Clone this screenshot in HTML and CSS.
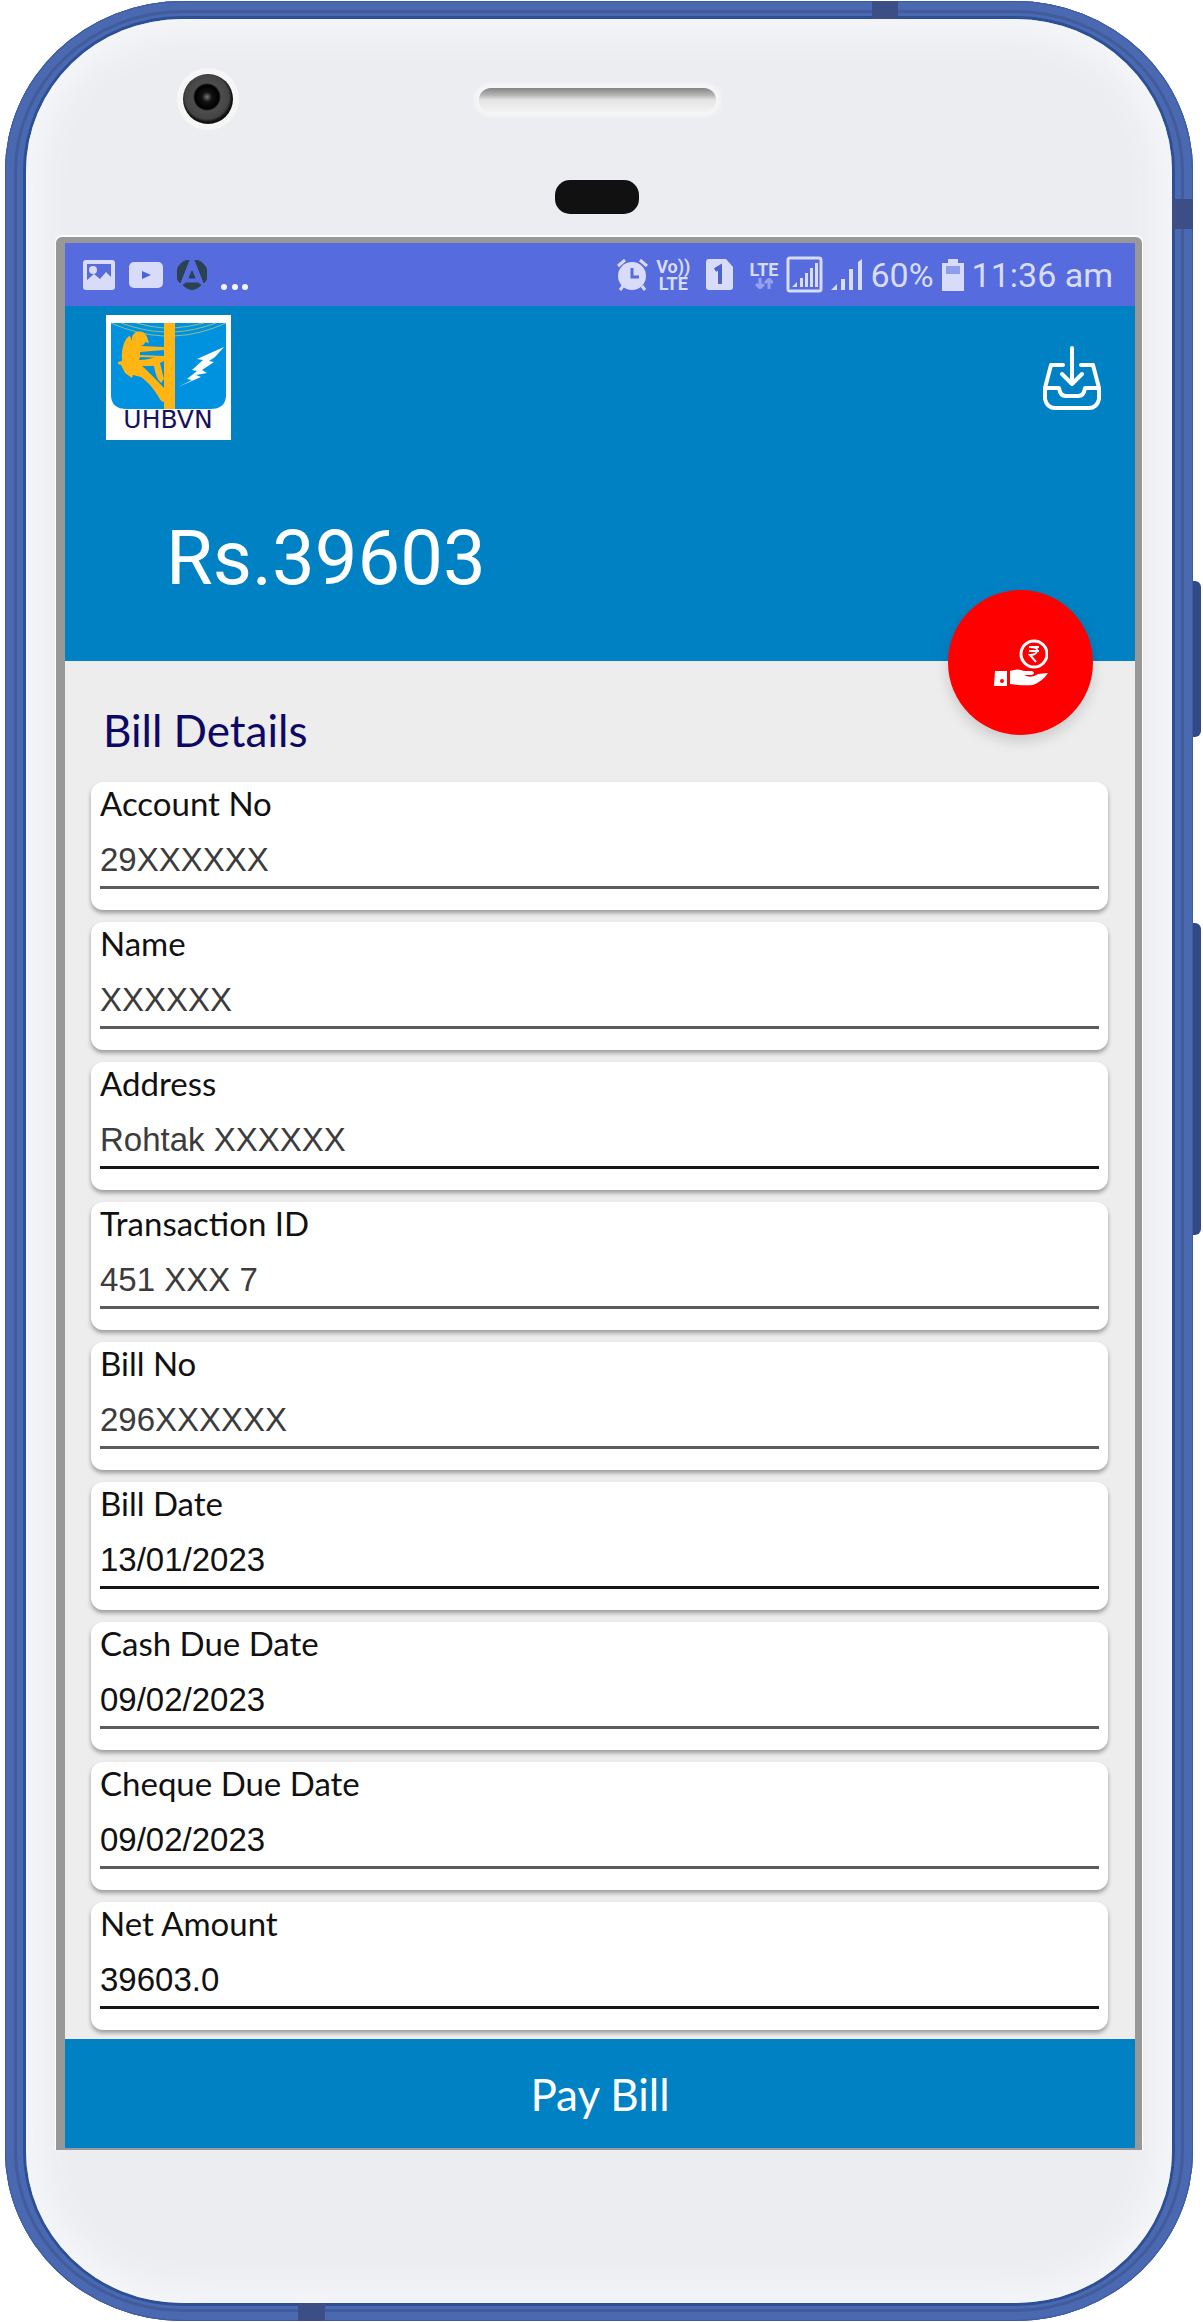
FILE: index.html
```html
<!DOCTYPE html>
<html lang="en">
<head>
  <meta charset="utf-8">
  <title>Bill Details</title>
  <link rel="stylesheet" href="styles.css">
</head>
<body>
  <div class="phone">
    <span class="antenna antenna-top"></span>
    <span class="antenna antenna-side"></span>
    <span class="antenna antenna-bottom"></span>
    <span class="side-button power-key"></span>
    <span class="side-button volume-key"></span>

    <div class="face">
      <div class="forehead">
        <span class="camera"></span>
        <span class="speaker"></span>
        <span class="sensor"></span>
      </div>

      <div class="screen">
        <div class="status-bar">
          <div class="status-left">
            <svg width="32" height="30" viewBox="0 0 32 30">
              <rect width="32" height="30" rx="3" fill="#d8dcf8"/>
              <path d="M4 4h24v13l-5-5-6 7-6-5-7 6z" fill="#566bdd"/>
              <circle cx="10" cy="10" r="4" fill="#d8dcf8"/>
            </svg>
            <svg width="34" height="26" viewBox="0 0 34 26">
              <rect width="34" height="26" rx="5" fill="#d8dcf8"/>
              <path d="M13 9l9 4-9 4z" fill="#4a62dc"/>
            </svg>
            <svg width="30" height="30" viewBox="0 0 30 30" fill="#2d4250">
              <path d="M12 0L3 23A14 14 0 0 1 12 0zM18 0l9 23A14 14 0 0 0 18 0zM15 11l3 7h-6zM6 25l3-2h12l3 2q-9 9-18 0z" stroke="#2d4250"/>
            </svg>
            <svg width="28" height="30" viewBox="0 0 28 30" fill="#f3f4ff">
              <circle cx="3" cy="27" r="3"/><circle cx="14" cy="27" r="3"/><circle cx="24" cy="27" r="3"/>
            </svg>
          </div>
          <div class="status-right">
            <svg width="31" height="32" viewBox="0 0 31 32">
              <circle cx="15" cy="17" r="14" fill="#d8dcf8"/>
              <path d="M1 7l7-6M30 7l-7-6M6 27l-3 4M25 27l3 4" stroke="#d8dcf8" stroke-width="3"/>
              <path d="M15 9v9h7" fill="none" stroke="#566bdd" stroke-width="3"/>
            </svg>
            <div class="volte"><span>Vo))</span><span>LTE</span></div>
            <svg class="sim" width="27" height="31" viewBox="0 0 27 31">
              <path d="M3 0h17l7 8v20q0 3-3 3H3q-3 0-3-3V3q0-3 3-3z" fill="#d8dcf8"/>
              <path d="M9 11l5-3v17" fill="none" stroke="#4f62cb" stroke-width="4"/>
            </svg>
            <div class="lte">
              <span>LTE</span>
              <svg width="18" height="11" viewBox="0 0 18 11" fill="none" stroke="#94a1ee" stroke-width="3">
                <path d="M5 0v8M1 6l4 4 4-4M14 11V3M10 5l4-4 4 4"/>
              </svg>
            </div>
            <svg width="37" height="37" viewBox="0 0 37 37">
              <rect x="2" y="2" width="33" height="33" rx="2" fill="none" stroke="#d8dcf8" stroke-width="3"/>
              <path d="M6 31l5-5v5zM14 31v-9h3v9zM19 31V17h3v14zM24 31V12h3v19zM29 31V7h3v24z" fill="#d8dcf8"/>
            </svg>
            <svg width="31" height="31" viewBox="0 0 31 31" fill="#d8dcf8">
              <path d="M0 31l6-6v6zM10 31V20h4v11zM18 31V10h4v21zM27 31V3l4-3v31z"/>
            </svg>
            <span>60%</span>
            <svg width="22" height="32" viewBox="0 0 22 32">
              <path d="M6 0h10v4h6v28H0V4h6z" fill="#d8dcf8"/>
              <path d="M4 7h14v8H4z" fill="#8f9ded"/>
            </svg>
            <time>11:36 am</time>
          </div>
        </div>

        <header class="header">
          <div class="toolbar">
            <svg class="logo" viewBox="0 0 125 125" role="img" aria-label="UHBVN">
              <path d="M0 0h125v125H0z" fill="#fff"/>
              <path d="M5 8h115v72q0 14-16 14H21Q5 94 5 80z" fill="#0092df"/>
              <g fill="none" stroke="#8bbf8c">
                <path d="M5 8q27 12 53 13M15 8q22 8 43 9M30 8q14 4 28 5M120 8Q94 20 68 21M110 8Q88 16 68 17M98 8Q82 12 68 13"/>
              </g>
              <path d="M58 8h11v86H58z" fill="#ffb514"/>
              <path d="M26 26q-1-6 4-9 8-2 11 5l2 6-4-1q0 3-5 4l24 1v3l-24 2v3l24 1v2l-24-1-1 3q10 0 19-4l6 2v3l-4 2 4 16-3 4q-5-4-7-17l-12 0q10 9 22 22v14q-3 0-6-6-8-13-17-19l-8-2-1 3-7-5-4-8-3-1v-2l4-1q-1-12 3-20 3-5 5-5z" fill="#ffb514"/>
              <path d="M118 32L91 44l6 1-11 10 5 1-10 8 5 1-14 7 23-10-5-2 11-2-5-3 12-8-5-1 6-4z" fill="#fff"/>
              <text class="logo-text" x="62" y="113" text-anchor="middle">UHBVN</text>
            </svg>
            <button class="download" aria-label="Download bill">
              <svg width="60" height="64" viewBox="0 0 60 64" fill="none" stroke="#fff" stroke-width="4" stroke-linecap="round" stroke-linejoin="round">
                <path d="M30 2v36M20 28l10 10 10-10M21 19H9L3 42v11q2 9 10 9h34q8 0 10-9V42l-6-23H39M3 42h14q1 8 7 8h12q6 0 7-8h14"/>
              </svg>
            </button>
          </div>
          <p class="amount">Rs.39603</p>
          <button class="fab" aria-label="Pay">
            <svg width="54" height="48" viewBox="0 0 54 48">
              <circle cx="40" cy="15" r="13" fill="none" stroke="#fff" stroke-width="3"/>
              <path d="M35 8h10M35 12h10M36 8q8 0 7 4-1 4-7 4l6 7" fill="none" stroke="#fff" stroke-width="2"/>
              <path d="M1 32h12v15H0z" fill="#fff"/>
              <circle cx="8" cy="42" r="2" fill="red"/>
              <path d="M16 32q8-3 14 0h8q4 2 0 4h-8q7 4 14-1l10-1q-5 8-15 12-10 1-23-1z" fill="#fff"/>
            </svg>
          </button>
        </header>

        <main class="details">
          <h1>Bill Details</h1>
          <form class="fields">
            <div class="card">
              <label for="account">Account No</label>
              <input id="account" class="masked" value="29XXXXXX" readonly>
            </div>
            <div class="card">
              <label for="name">Name</label>
              <input id="name" class="masked" value="XXXXXX" readonly>
            </div>
            <div class="card">
              <label for="address">Address</label>
              <input id="address" class="masked strong-line" value="Rohtak XXXXXX" readonly>
            </div>
            <div class="card">
              <label for="transaction">Transaction ID</label>
              <input id="transaction" class="masked" value="451 XXX 7" readonly>
            </div>
            <div class="card">
              <label for="bill-no">Bill No</label>
              <input id="bill-no" class="masked" value="296XXXXXX" readonly>
            </div>
            <div class="card">
              <label for="bill-date">Bill Date</label>
              <input id="bill-date" class="strong-line" value="13/01/2023" readonly>
            </div>
            <div class="card">
              <label for="cash-due">Cash Due Date</label>
              <input id="cash-due" value="09/02/2023" readonly>
            </div>
            <div class="card">
              <label for="cheque-due">Cheque Due Date</label>
              <input id="cheque-due" value="09/02/2023" readonly>
            </div>
            <div class="card">
              <label for="net">Net Amount</label>
              <input id="net" class="strong-line" value="39603.0" readonly>
            </div>
          </form>
        </main>

        <button class="pay">Pay Bill</button>
      </div>
    </div>
  </div>
</body>
</html>
```

FILE: styles.css
```css
:root {
  --frame: #4a69b0;
  --face: #ecedf1;
  --status: #566bdd;
  --status-icon: #d8dcf8;
  --blue: #0081c4;
  --page: #ededed;
}

* {
  margin: 0;
  padding: 0;
  box-sizing: border-box;
}

body {
  background: #fff;
  font-family: Lato, "Open Sans", sans-serif;
  padding: 1px 10px 2px 5px;
}

button {
  border: 0;
  background: none;
  font: inherit;
  cursor: pointer;
}

svg {
  display: block;
  flex: none;
}

/* phone body */
.phone {
  position: relative;
  padding: 18px 21px;
  border-radius: 178px / 170px;
  background: var(--frame);
  box-shadow: inset 0 0 0 1px #3d5ba4, inset 0 0 0 9px #4a69b0, inset 0 0 0 12px #415c9c;
}

.face {
  padding: 0 30px 153px;
  border-radius: 156px / 152px;
  background: var(--face);
  box-shadow: 0 0 0 3px #2c4f96, inset 0 0 40px 8px #f8f9fb;
}

.antenna {
  position: absolute;
  background: #3c4e86;
}

.antenna-top {
  top: 0;
  left: 867px;
  width: 26px;
  height: 18px;
}

.antenna-side {
  top: 198px;
  right: 0;
  width: 21px;
  height: 30px;
}

.antenna-bottom {
  bottom: 0;
  left: 293px;
  width: 27px;
  height: 18px;
}

.side-button {
  position: absolute;
  left: 100%;
  width: 8px;
  border-radius: 0 6px 6px 0;
  background: #314a85;
}

.power-key {
  top: 580px;
  height: 156px;
}

.volume-key {
  top: 922px;
  height: 312px;
}

.forehead {
  position: relative;
  height: 218px;
}

.camera,
.speaker,
.sensor {
  position: absolute;
}

.camera {
  top: 55px;
  left: 127px;
  width: 50px;
  height: 50px;
  border-radius: 50%;
  background: radial-gradient(circle at 48% 46%, #777 0, #111 5px, #000 12px, #4d4d4d 14px, #444 22px, #111 25px);
  box-shadow: 0 0 0 6px #f6f6f6;
}

.speaker {
  top: 69px;
  left: 423px;
  width: 237px;
  height: 24px;
  border-radius: 12px;
  background: linear-gradient(#858585, #b5b5b5 30%, #e5e5e5 50%, #f3f3f3);
  box-shadow: 0 0 3px 5px #f5f5f6;
}

.sensor {
  top: 161px;
  left: 499px;
  width: 84px;
  height: 34px;
  border-radius: 15px;
  background: #111;
}

/* screen */
.screen {
  border: solid #989898;
  border-width: 6px 7px 2px 9px;
  border-radius: 6px 6px 0 0;
  background: var(--page);
  box-shadow: 0 -1px 0 1px #fff;
}

.status-bar {
  display: flex;
  justify-content: space-between;
  align-items: center;
  height: 63px;
  padding: 0 22px 0 18px;
  background: var(--status);
  color: var(--status-icon);
  font-family: Roboto, sans-serif;
}

.status-left,
.status-right {
  display: flex;
  align-items: center;
}

.status-left {
  gap: 14px;
}

.status-right {
  gap: 8px;
  font-size: 34px;
}

.volte,
.lte {
  display: flex;
  flex-direction: column;
  align-items: center;
  font-size: 18px;
  font-weight: 700;
  line-height: 17px;
}

.sim {
  margin: 0 8px;
}

.header {
  position: relative;
  height: 355px;
  padding: 9px 33px 0 41px;
  background: var(--blue);
  color: #fff;
}

.toolbar {
  display: flex;
  justify-content: space-between;
  align-items: center;
}

.logo {
  width: 125px;
  height: 125px;
}

.logo-text {
  fill: #17105e;
  font: 25px "DejaVu Sans", sans-serif;
}

.amount {
  margin: 72px 0 0 60px;
  font-family: Roboto, sans-serif;
  font-size: 76px;
  line-height: 92px;
}

.fab {
  position: absolute;
  right: 42px;
  bottom: -74px;
  display: grid;
  place-items: center;
  width: 145px;
  height: 145px;
  border-radius: 50%;
  background: red;
  box-shadow: 0 6px 14px rgba(0, 0, 0, .15);
}

/* bill */
.details {
  padding: 44px 27px 9px 26px;
}

h1 {
  padding-left: 12px;
  color: #0d0866;
  font-size: 44px;
  font-weight: 400;
  line-height: 50px;
}

.fields {
  display: grid;
  gap: 12px;
  margin-top: 27px;
}

.card {
  height: 128px;
  padding: 2px 9px 0;
  border-radius: 12px;
  background: #fff;
  box-shadow: 0 3px 4px rgba(0, 0, 0, .35);
}

.card label {
  display: block;
  color: #111;
  font-size: 33px;
  line-height: 38px;
}

.card input {
  display: block;
  width: 100%;
  height: 67px;
  padding-top: 12px;
  border: 0;
  border-bottom: 3px solid #5c5c5c;
  outline: 0;
  background: none;
  color: #111;
  font: 33px "Liberation Sans", Arial, sans-serif;
}

.card .masked {
  color: #3c3c3c;
}

.card .strong-line {
  border-color: #151515;
}

.pay {
  display: block;
  width: 100%;
  height: 109px;
  background: var(--blue);
  color: #fff;
  font-size: 44px;
}
```
